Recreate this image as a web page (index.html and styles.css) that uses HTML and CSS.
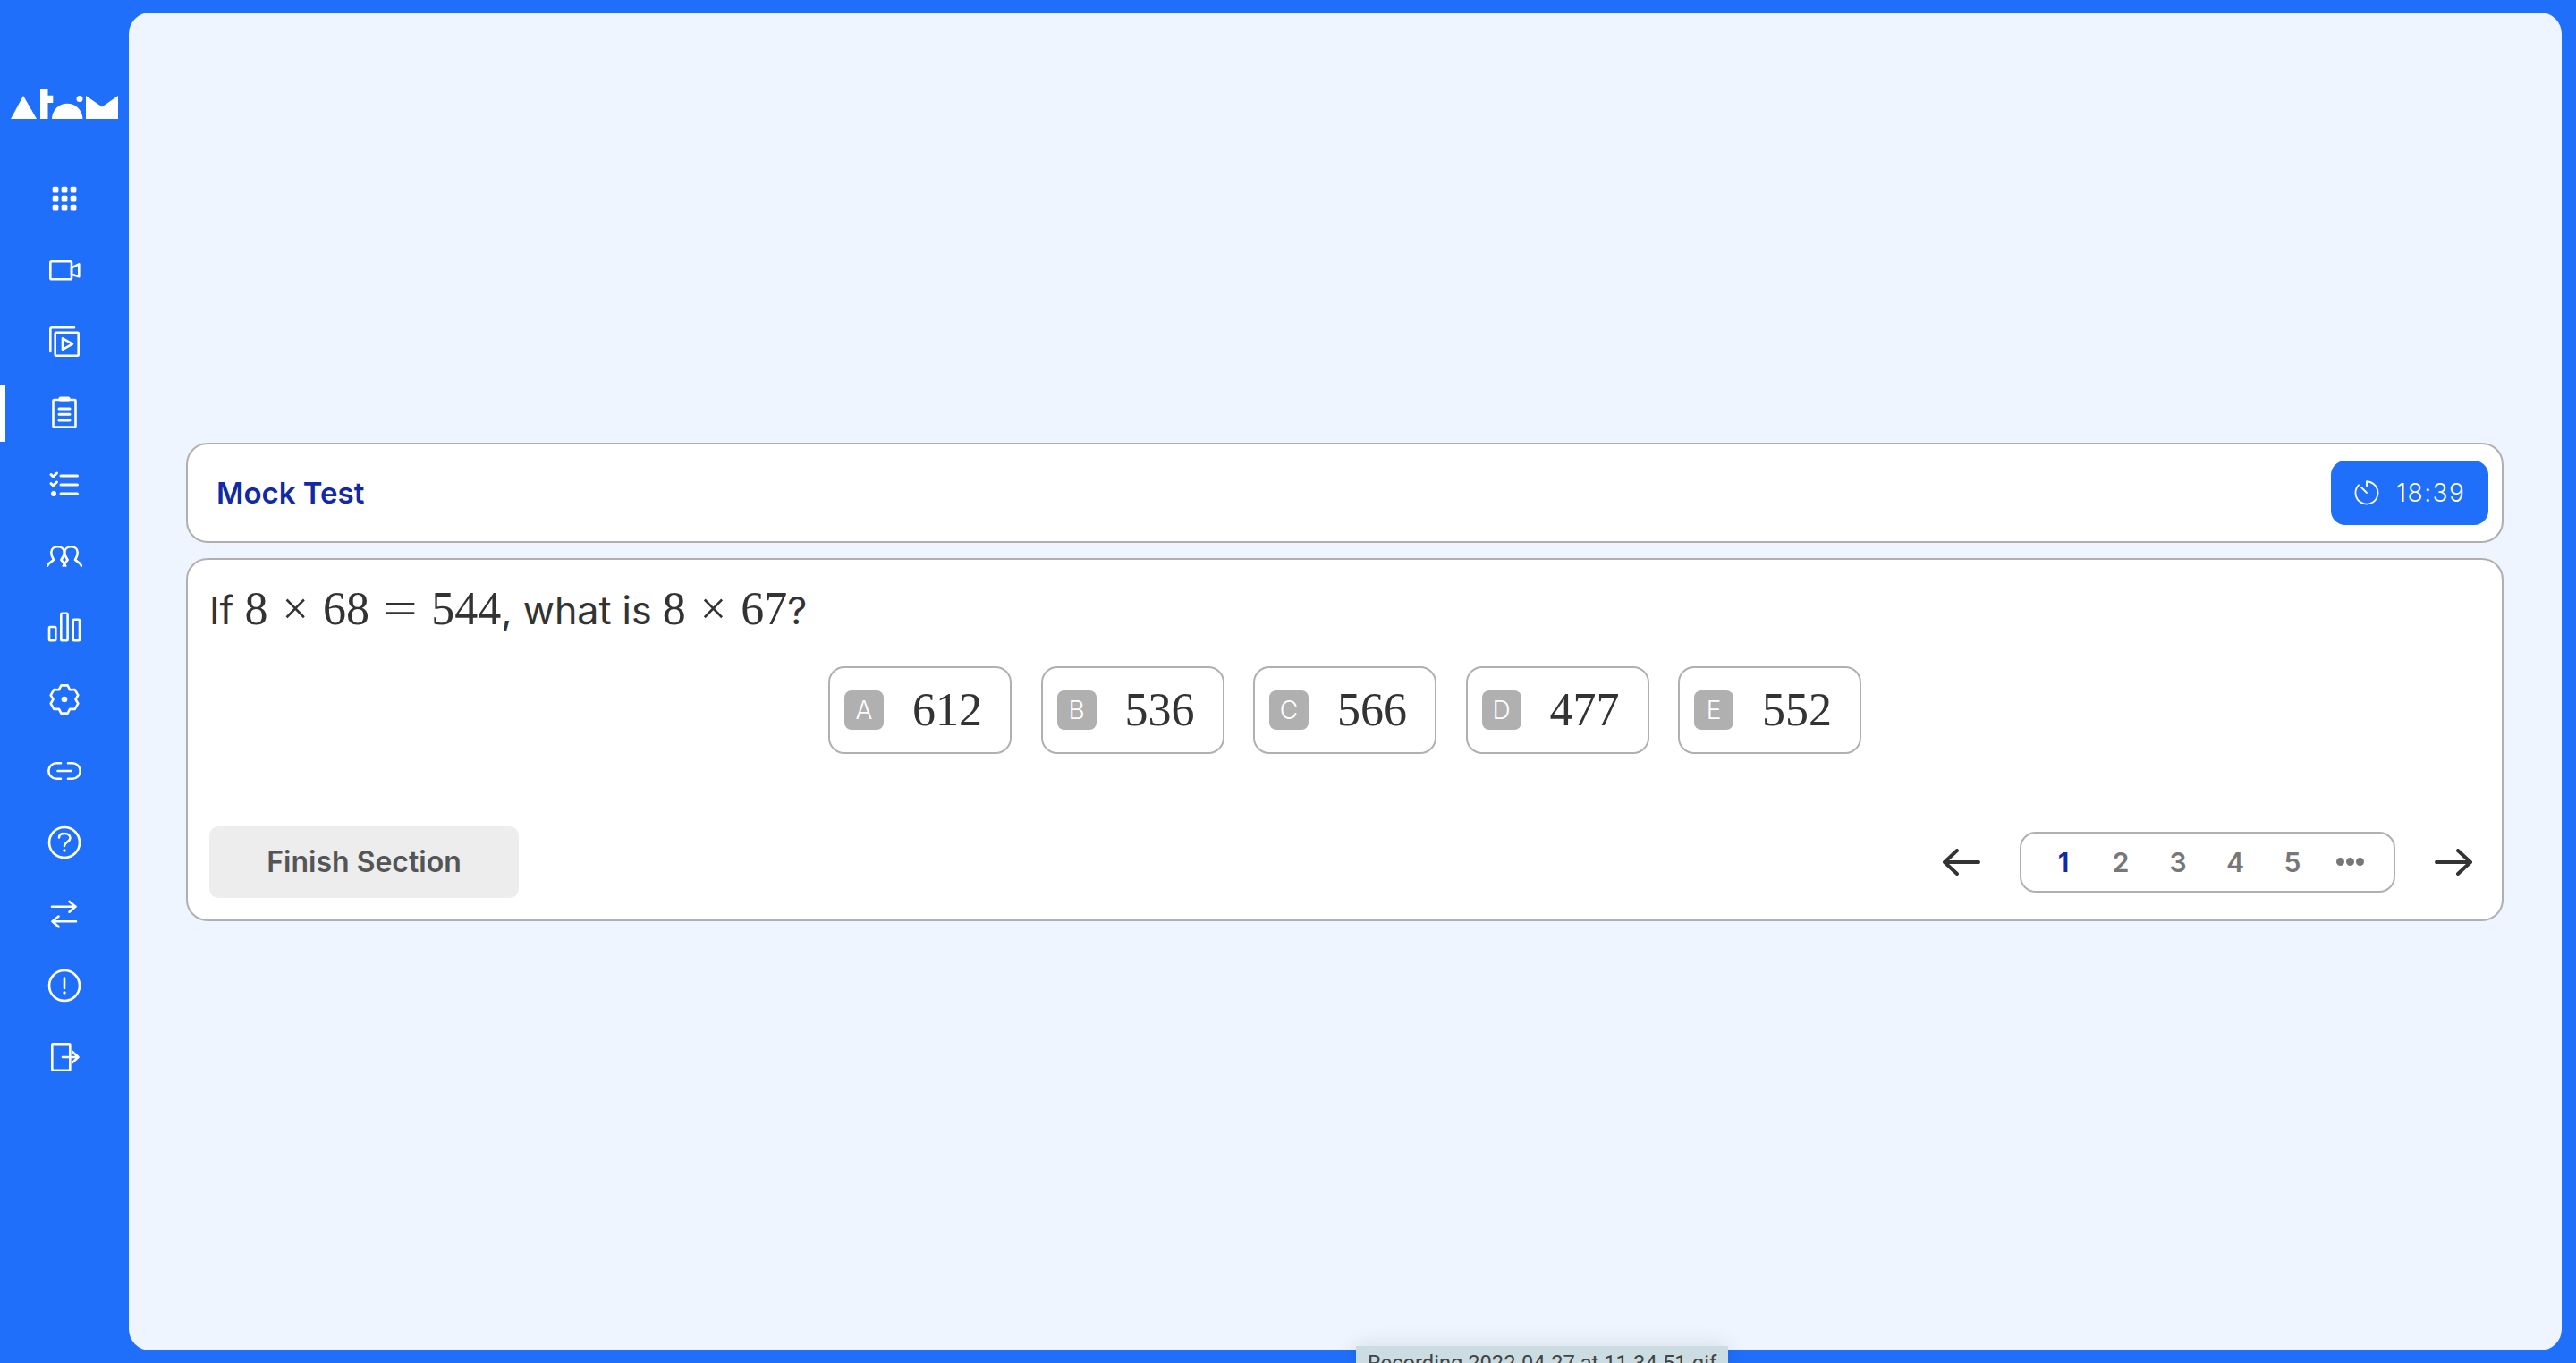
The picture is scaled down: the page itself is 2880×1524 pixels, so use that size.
FILE: index.html
```html
<!DOCTYPE html>
<html>
  <head>
    <meta name="viewport" content="width=device-width, initial-scale=1.0" />
    <meta charset="utf-8" />
    <title>Mock Test</title>
    <link rel="stylesheet" href="styles.css">
  </head>
  <body>
    <aside class="sidebar">
      <svg class="sidebar__logo" viewBox="0 0 120 33" width="120" height="33">
        <polygon points="0,33 14,7 29,33" />
        <polygon points="33,0 41.500,0 41.500,6.700 47.300,6.700 47.300,15 41.500,15 41.500,33 33,33" />
        <path d="M46 33a17.200 17.200 0 0 1 34.400 0z" />
        <circle cx="77" cy="10.500" r="3.500" />
        <polygon points="84,33 84,7 102,19.500 120,7 120,33" />
      </svg>
      <nav class="sidebar__nav">
        <a class="nav-item">
          <svg class="nav-icon nav-icon--solid" viewBox="0 0 40 40">
            <rect x="6.700" y="6.700" width="6.700" height="6.700" rx="1.500" />
            <rect x="16.700" y="6.700" width="6.700" height="6.700" rx="1.500" />
            <rect x="26.700" y="6.700" width="6.700" height="6.700" rx="1.500" />
            <rect x="6.700" y="16.700" width="6.700" height="6.700" rx="1.500" />
            <rect x="16.700" y="16.700" width="6.700" height="6.700" rx="1.500" />
            <rect x="26.700" y="16.700" width="6.700" height="6.700" rx="1.500" />
            <rect x="6.700" y="26.700" width="6.700" height="6.700" rx="1.500" />
            <rect x="16.700" y="26.700" width="6.700" height="6.700" rx="1.500" />
            <rect x="26.700" y="26.700" width="6.700" height="6.700" rx="1.500" />
          </svg>
        </a>
        <a class="nav-item">
          <svg class="nav-icon" viewBox="0 0 40 40">
            <rect x="4.300" y="10.300" width="23.700" height="20" rx="1.500" />
            <path d="M28 17.300l8.300-4v14l-8.300-2.500z" />
          </svg>
        </a>
        <a class="nav-item">
          <svg class="nav-icon" viewBox="0 0 40 40">
            <path d="M31 4.300H6a1.700 1.700 0 0 0-1.700 1.700v25" />
            <rect x="9.700" y="9.700" width="26" height="26" rx="1" />
            <path d="M18 16.300l11 6.300-11 6.300z" />
          </svg>
        </a>
        <a class="nav-item nav-item--active">
          <svg class="nav-icon" viewBox="0 0 40 40">
            <rect x="7.500" y="5" width="25" height="30.500" rx="1" />
            <rect class="nav-icon__dot" x="13.500" y="1.500" width="13" height="5" rx="2" />
            <path class="nav-icon__thick" d="M14 15h12M14 21.300h12M14 28h12" />
          </svg>
        </a>
        <a class="nav-item">
          <svg class="nav-icon" viewBox="0 0 40 40">
            <path class="nav-icon__thick" d="M16 10h18.500M16 20h18.500M16 30h18.500" />
            <path class="nav-icon__thick" d="M5 8.700l2.500 2.300 4-4M5 18.700l2.500 2.300 4-4" />
            <circle class="nav-icon__dot" cx="8" cy="30" r="3" />
          </svg>
        </a>
        <a class="nav-item">
          <svg class="nav-icon" viewBox="0 0 40 40">
            <path d="M1 30.700C2.500 27.500 5 26 8 24C6 21 5.300 18.500 5.300 15.500C5.300 11.800 8.500 9.300 12.500 9.300C16.500 9.300 19.700 11.800 19.700 15.500C19.700 18.500 18.500 21.500 16.300 24C18 26 20 28 21.300 30.700" />
            <path d="M39 30.700C37.500 27.500 35 26 32 24C34 21 34.700 18.500 34.700 15.500C34.700 11.800 31.500 9.300 27.500 9.300C23.500 9.300 20.300 11.800 20.300 15.500C20.300 18.500 21.500 21.500 23.700 24C22 26 20 28 18.700 30.700" />
          </svg>
        </a>
        <a class="nav-item">
          <svg class="nav-icon" viewBox="0 0 40 40">
            <rect x="3" y="19" width="7.300" height="15.300" rx="1" />
            <rect x="16.300" y="3.700" width="7.300" height="30.600" rx="1" />
            <rect x="29.700" y="10.700" width="7.300" height="23.600" rx="1" />
          </svg>
        </a>
        <a class="nav-item">
          <svg class="nav-icon" viewBox="0 0 40 40">
            <polygon points="16.400,4.400 23.600,4.400 26.200,9.300 31.700,9.100 35.300,15.300 32.500,20 35.300,24.700 31.700,30.900 26.200,30.700 23.600,35.600 16.400,35.600 13.800,30.700 8.300,30.900 4.700,24.700 7.500,20 4.700,15.300 8.300,9.100 13.800,9.300" />
            <circle class="nav-icon__dot" cx="20" cy="20" r="3.300" />
          </svg>
        </a>
        <a class="nav-item">
          <svg class="nav-icon" viewBox="0 0 40 40">
            <path d="M16 11.300H11a8.700 8.700 0 0 0 0 17.400H16" />
            <path d="M24 11.300H29a8.700 8.700 0 0 1 0 17.400H24" />
            <path d="M12.500 20h15" />
          </svg>
        </a>
        <a class="nav-item">
          <svg class="nav-icon" viewBox="0 0 40 40">
            <circle cx="20" cy="20" r="17" />
            <path d="M14 14.500C14 11.500 16.500 10 20 10C23.500 10 26.500 12 26.500 15C26.500 19 20 19.500 20 24" />
            <circle class="nav-icon__dot" cx="20" cy="29" r="1.700" />
          </svg>
        </a>
        <a class="nav-item">
          <svg class="nav-icon" viewBox="0 0 40 40">
            <path d="M6 11.700h26.500M25.500 6l7 5.700-7 6M33 28.300H6.500M13.500 22.600l-7 5.700 7 6" />
          </svg>
        </a>
        <a class="nav-item">
          <svg class="nav-icon" viewBox="0 0 40 40">
            <circle cx="20" cy="20" r="17" />
            <path d="M20 11.500v11.500" />
            <circle class="nav-icon__dot" cx="20" cy="28" r="1.700" />
          </svg>
        </a>
        <a class="nav-item">
          <svg class="nav-icon" viewBox="0 0 40 40">
            <rect x="6.300" y="5.300" width="20" height="29.400" rx="0.500" />
            <path d="M18 20h17M29 14l6.500 6-6.500 6" />
          </svg>
        </a>
      </nav>
    </aside>

    <main class="main">
      <header class="card test-header">
        <h1 class="test-header__title">Mock Test</h1>
        <div class="timer">
          <svg class="timer__icon" viewBox="0 0 28 28">
            <path d="M14 1.500a12.500 12.500 0 1 1-9 3.800" />
            <path d="M14 1.500v5M8 8l6 6" />
          </svg>
          <span>18:39</span>
        </div>
      </header>

      <section class="card question">
        <p class="question__text">If <span class="math">8<span class="math__op">×</span>68<span class="math__rel">=</span>544</span>, what is <span class="math">8<span class="math__op">×</span>67</span>?</p>

        <div class="options">
          <button class="option"><span class="option__key">A</span><span class="math">612</span></button>
          <button class="option"><span class="option__key">B</span><span class="math">536</span></button>
          <button class="option"><span class="option__key">C</span><span class="math">566</span></button>
          <button class="option"><span class="option__key">D</span><span class="math">477</span></button>
          <button class="option"><span class="option__key">E</span><span class="math">552</span></button>
        </div>

        <div class="question__footer">
          <button class="finish-btn">Finish Section</button>
          <div class="pager">
            <svg class="pager__arrow" viewBox="0 0 42 30">
              <path d="M40 15H2M16 2L2 15l14 13" />
            </svg>
            <div class="pager__pages">
              <span class="pager__page pager__page--current">1</span>
              <span class="pager__page">2</span>
              <span class="pager__page">3</span>
              <span class="pager__page">4</span>
              <span class="pager__page">5</span>
              <span class="pager__page pager__dots"><i></i><i></i><i></i></span>
            </div>
            <svg class="pager__arrow" viewBox="0 0 42 30">
              <path d="M2 15h38M26 2l14 13-14 13" />
            </svg>
          </div>
        </div>
      </section>
    </main>

    <div class="download-tip">Recording 2022-04-27 at 11.34.51.gif</div>
  </body>
</html>
```

FILE: styles.css
```css
body {
  --color-primary: #1f6ffa;
  --color-navy: #1029a5;
  --color-border: #b0b0b0;
  --color-text: #333333;

  margin: 0;
  height: 100vh;
  display: flex;
  overflow: hidden;
  background: var(--color-primary);
  color: var(--color-text);
  font-family: "Inter", sans-serif;
}

.sidebar {
  width: 144px;
  flex-shrink: 0;
  padding-top: 100px;
  box-sizing: border-box;
}

.sidebar__logo {
  display: block;
  margin-left: 12px;
  fill: #ffffff;
}

.sidebar__nav {
  margin-top: 49px;
}

.nav-item {
  position: relative;
  height: 80px;
  display: flex;
  align-items: center;
  justify-content: center;
}

.nav-item--active::before {
  content: "";
  position: absolute;
  left: 0;
  top: 8px;
  width: 6px;
  height: 64px;
  background: #ffffff;
}

.nav-icon {
  width: 40px;
  height: 40px;
  fill: none;
  stroke: #ffffff;
  stroke-width: 2.600;
  stroke-linecap: round;
  stroke-linejoin: round;
}

.nav-icon--solid {
  fill: #ffffff;
  stroke: none;
}

.nav-icon__thick {
  stroke-width: 3;
}

.nav-icon__dot {
  fill: #ffffff;
  stroke: none;
}

.main {
  flex: 1;
  margin: 14px 16px 14px 0;
  padding: 0 65px 0 64px;
  display: flex;
  flex-direction: column;
  justify-content: center;
  gap: 17px;
  border-radius: 24px;
  background: #eef5fe;
}

.card {
  box-sizing: border-box;
  border: 2px solid var(--color-border);
  border-radius: 24px;
  background: #ffffff;
}

.test-header {
  height: 112px;
  padding: 0 15px 0 32px;
  display: flex;
  align-items: center;
  justify-content: space-between;
}

.test-header__title {
  margin: 0;
  font-size: 33px;
  font-weight: 600;
  color: var(--color-navy);
}

.timer {
  width: 176px;
  height: 72px;
  box-sizing: border-box;
  padding-left: 26px;
  display: flex;
  align-items: center;
  gap: 19px;
  border-radius: 16px;
  background: var(--color-primary);
  color: #ffffff;
  font-size: 28px;
  font-weight: 300;
  letter-spacing: 1.500px;
}

.timer__icon {
  width: 28px;
  height: 28px;
  flex-shrink: 0;
  fill: none;
  stroke: #ffffff;
  stroke-width: 1.800;
  stroke-linecap: round;
}

.question {
  height: 406px;
  padding: 24px;
}

.question__text {
  margin: 0;
  font-size: 43px;
  line-height: 62px;
  white-space: nowrap;
}

.math {
  font-family: "Liberation Serif", serif;
  font-size: 52px;
}

.math__op {
  margin: 0 16px;
}

.math__rel {
  display: inline-block;
  margin: 0 20px;
  transform: scaleX(1.300);
}

.options {
  margin-top: 32px;
  display: flex;
  justify-content: center;
  gap: 32.500px;
}

.option {
  width: 205px;
  height: 98px;
  box-sizing: border-box;
  padding: 0 16px;
  display: flex;
  align-items: center;
  gap: 32px;
  border: 2px solid var(--color-border);
  border-radius: 18px;
  background: #ffffff;
  color: var(--color-text);
}

.option__key {
  width: 44px;
  height: 44px;
  display: flex;
  align-items: center;
  justify-content: center;
  border-radius: 8px;
  background: var(--color-border);
  color: #ffffff;
  font-family: "Inter", sans-serif;
  font-size: 28px;
  font-weight: 300;
}

.question__footer {
  margin-top: 81px;
  padding-right: 9px;
  display: flex;
  align-items: center;
  justify-content: space-between;
}

.finish-btn {
  width: 346px;
  height: 80px;
  border: none;
  border-radius: 10px;
  background: #ededed;
  color: #555555;
  font: 600 32px "Inter", sans-serif;
}

.pager {
  display: flex;
  align-items: center;
  gap: 44px;
}

.pager__arrow {
  width: 42px;
  height: 30px;
  fill: none;
  stroke: var(--color-text);
  stroke-width: 4;
  stroke-linecap: round;
  stroke-linejoin: round;
}

.pager__pages {
  width: 420px;
  height: 68px;
  box-sizing: border-box;
  padding-left: 15px;
  display: flex;
  align-items: center;
  border: 2px solid var(--color-border);
  border-radius: 18px;
}

.pager__page {
  width: 64px;
  text-align: center;
  font-size: 30px;
  font-weight: 600;
  color: #777777;
}

.pager__page--current {
  color: var(--color-navy);
}

.pager__dots {
  display: flex;
  justify-content: center;
  gap: 2px;
}

.pager__dots i {
  width: 9px;
  height: 9px;
  border-radius: 50%;
  background: #777777;
}

.download-tip {
  position: absolute;
  left: 1516px;
  top: 1505px;
  width: 416px;
  height: 19px;
  box-sizing: border-box;
  padding: 5px 0 0 13px;
  overflow: hidden;
  background: #cbdde2;
  box-shadow: 0 0 24px rgba(0, 0, 0, 0.12);
  color: #444444;
  font: 400 23.700px/1.2 "Roboto", sans-serif;
  white-space: nowrap;
}
```
